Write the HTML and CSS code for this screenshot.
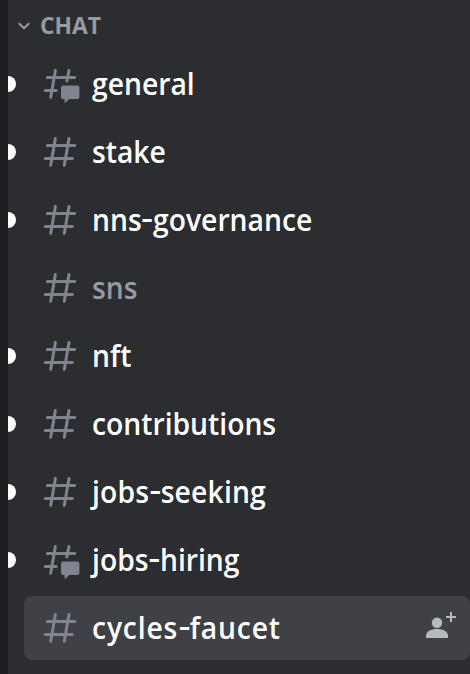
FILE: index.html
```html
<!DOCTYPE html>
<html lang="en">
<head>
<meta charset="utf-8">
<title>Channels</title>
<link rel="stylesheet" href="styles.css">
</head>
<body>
<svg class="symbols" aria-hidden="true">
  <symbol id="hash" viewBox="0 0 40 40">
    <path d="M15.4 6.4 10.7 33.3M29 6.4 24.3 33.3M7.4 13.4H34.7M5.3 26.6H32.3"/>
  </symbol>
  <symbol id="forum" viewBox="0 0 40 40">
    <path d="M15.4 6.4 10.7 33.3M29 6.4 26.9 17M7.4 13.4H34.7M5.3 26.6H16.2"/>
    <path class="bubble" d="M23 21.4H37.4Q39.4 21.4 39.4 23.4V33Q39.4 35 37.4 35H29.2L25.6 38.6Q24.6 39.4 24.6 38V35H23Q21 35 21 33V23.4Q21 21.4 23 21.4Z"/>
  </symbol>
</svg>
<nav class="sidebar">
  <header class="category">
    <svg class="chevron" viewBox="0 0 16 16"><path d="M3.4 5.7 8 10.3 12.6 5.7"/></svg>
    <span class="title">CHAT</span>
  </header>
  <ul class="channels">
    <li class="channel unread"><svg class="icon"><use href="#forum"/></svg><span class="name">general</span></li>
    <li class="channel unread"><svg class="icon"><use href="#hash"/></svg><span class="name">stake</span></li>
    <li class="channel unread"><svg class="icon"><use href="#hash"/></svg><span class="name">nns<span class="dash">-</span>governance</span></li>
    <li class="channel muted"><svg class="icon"><use href="#hash"/></svg><span class="name">sns</span></li>
    <li class="channel unread"><svg class="icon"><use href="#hash"/></svg><span class="name">nft</span></li>
    <li class="channel unread"><svg class="icon"><use href="#hash"/></svg><span class="name">contributions</span></li>
    <li class="channel unread"><svg class="icon"><use href="#hash"/></svg><span class="name seeking">jobs<span class="dash">-</span>seeking</span></li>
    <li class="channel unread"><svg class="icon"><use href="#forum"/></svg><span class="name">jobs<span class="dash">-</span>hiring</span></li>
    <li class="channel selected"><svg class="icon"><use href="#hash"/></svg><span class="name faucet">cycles<span class="dash">-</span>faucet</span>
      <svg class="invite" viewBox="0 0 32 32"><circle cx="13" cy="10.8" r="5.2"/><path d="M2 26V24C2 19.5 7 17 13 17S24 19.5 24 24V26Z"/><path d="M26 0H28V4H32V6H28V10H26V6H22V4H26Z"/></svg>
    </li>
  </ul>
</nav>
</body>
</html>
```
FILE: styles.css
```css
* { box-sizing: border-box; }
body {
  margin: 0;
  height: 674px;
  overflow: hidden;
  background: #2b2d31;
  font-family: "Open Sans", "Noto Sans", sans-serif;
}
.symbols { position: absolute; width: 0; height: 0; }
.sidebar { height: 100%; border-left: 8px solid #1e1f22; }
.category {
  display: flex;
  align-items: center;
  height: 52px;
  padding-left: 8px;
  gap: 8px;
  color: #949ba4;
}
.chevron {
  width: 16px;
  height: 16px;
  fill: none;
  stroke: currentColor;
  stroke-width: 2;
  stroke-linecap: round;
  stroke-linejoin: round;
}
.title {
  margin-bottom: 2px;
  font-size: 24px;
  font-weight: 700;
  line-height: 32px;
  transform: scaleX(.95);
  transform-origin: left;
}
.channels {
  display: flex;
  flex-direction: column;
  gap: 4px;
  margin: 0;
  padding: 0 0 0 16px;
  list-style: none;
}
.channel {
  position: relative;
  display: flex;
  align-items: center;
  height: 64px;
  padding: 0 14px 0 16px;
  border-radius: 8px;
  color: #fff;
}
.unread::before {
  content: "";
  position: absolute;
  left: -16px;
  top: 24px;
  width: 8px;
  height: 16px;
  border-radius: 0 8px 8px 0;
  background: #fff;
}
.muted { color: #949ba4; }
.selected { background: #404146; }
.icon {
  flex: none;
  width: 40px;
  height: 40px;
  margin-right: 12px;
  fill: none;
  stroke: #80848e;
  stroke-width: 3;
  stroke-linecap: round;
}
.bubble { fill: #80848e; stroke: none; }
.name {
  margin-bottom: 2px;
  font-size: 31px;
  font-weight: 600;
  line-height: 40px;
  white-space: nowrap;
  transform: scaleX(.912);
  transform-origin: left;
}
.dash {
  display: inline-block;
  width: 12.5px;
  transform: translateY(-2px) scaleX(1.28);
  transform-origin: left;
}
.seeking { letter-spacing: .2px; }
.faucet { letter-spacing: .93px; }
.invite { width: 32px; height: 32px; margin-left: auto; fill: #b5bac1; }
```
